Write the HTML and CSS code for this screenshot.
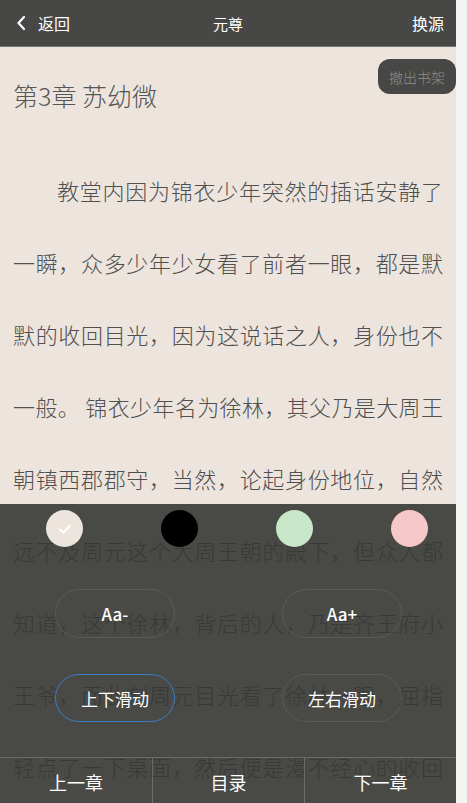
FILE: index.html
```html
<!DOCTYPE html>
<html lang="zh">
<head>
<meta charset="utf-8">
<title>元尊</title>
<link rel="stylesheet" href="styles.css">
</head>
<body>
<div class="page">
  <header class="topbar">
    <div class="back">
      <svg class="chev" width="10" height="16" viewBox="0 0 10 16"><path d="M8 2 L2.5 8 L8 14" fill="none" stroke="#fff" stroke-width="2.2" stroke-linecap="round" stroke-linejoin="round"/></svg>
      <span>返回</span>
    </div>
    <div class="title">元尊</div>
    <div class="source">换源</div>
  </header>

  <main class="reader">
    <h1 class="chapter">第3章 苏幼微</h1>
    <p class="text">教堂内因为锦衣少年突然的插话安静了一瞬，众多少年少女看了前者一眼，都是默默的收回目光，因为这说话之人，身份也不一般。 锦衣少年名为徐林，其父乃是大周王朝镇西郡郡守，当然，论起身份地位，自然远不及周元这个大周王朝的殿下，但众人都知道，这个徐林，背后的人，乃是齐王府小王爷，而此刻周元目光看了徐林一眼，屈指轻点了一下桌面，然后便是漫不经心的收回了目光，似乎并未将其放在心上。</p>
  </main>

  <button class="shelf">撤出书架</button>

  <section class="panel">
    <div class="swatches">
      <span class="swatch beige">
        <svg width="14" height="12" viewBox="0 0 14 12"><path d="M2 6.5 L5.5 9.5 L12 2.5" fill="none" stroke="#fff" stroke-width="2" stroke-linecap="round" stroke-linejoin="round"/></svg>
      </span>
      <span class="swatch black"></span>
      <span class="swatch green"></span>
      <span class="swatch pink"></span>
    </div>
    <div class="btnrow">
      <button class="pill">Aa-</button>
      <button class="pill">Aa+</button>
    </div>
    <div class="btnrow second">
      <button class="pill active">上下滑动</button>
      <button class="pill">左右滑动</button>
    </div>
    <nav class="bottombar">
      <a class="navitem">上一章</a>
      <a class="navitem">目录</a>
      <a class="navitem">下一章</a>
    </nav>
  </section>
</div>
</body>
</html>
```

FILE: styles.css
```css
html, body {
  margin: 0;
  padding: 0;
  height: 100%;
  overflow: hidden;
}
body {
  background: #f3f3f3;
  font-family: "Noto Sans CJK SC", "Noto Sans", sans-serif;
}
.page {
  position: relative;
  width: 456px;
  height: 803px;
  background: #ede5dd;
  overflow: hidden;
}
.topbar {
  height: 46px;
  background: #474846;
  border-bottom: 1px solid #7a7a78;
  display: flex;
  align-items: center;
  justify-content: space-between;
  padding: 0 12px 0 16px;
  color: #fff;
  font-size: 16px;
  position: relative;
}
.back {
  display: flex;
  align-items: center;
  gap: 12px;
}
.chev { display: block; }
.title {
  position: absolute;
  left: 0;
  right: 0;
  text-align: center;
  pointer-events: none;
  font-size: 15px;
}
.reader {
  padding: 0 13px;
}
.chapter {
  margin: 0;
  padding-top: 30px;
  height: 63px;
  line-height: 36px;
  font-size: 25px;
  font-weight: 300;
  color: #555;
}
.text {
  margin: 14px 0 0;
  font-size: 22px;
  font-weight: 300;
  line-height: 72px;
  color: #4f4f4f;
  text-indent: 2em;
  text-align: justify;
}
.shelf {
  position: absolute;
  top: 59px;
  right: 0;
  width: 78px;
  height: 35px;
  border: none;
  border-radius: 12px;
  background: #474846;
  color: #8d8d8b;
  font-family: "Noto Sans CJK SC", sans-serif;
  font-size: 14px;
  font-weight: 300;
  padding: 0;
}
.panel {
  position: absolute;
  left: 0;
  bottom: 0;
  width: 456px;
  height: 299px;
  background: rgba(54, 55, 53, 0.9);
  display: flex;
  flex-direction: column;
}
.swatches {
  display: flex;
  gap: 78px;
  padding: 6px 0 0 46px;
  height: 37px;
}
.swatch {
  width: 37px;
  height: 37px;
  border-radius: 50%;
  display: flex;
  align-items: center;
  justify-content: center;
}
.swatch.beige { background: #ede5dd; }
.swatch.black { background: #000; }
.swatch.green { background: #c8e6c8; }
.swatch.pink { background: #f7c8c8; }
.btnrow {
  display: flex;
  gap: 107px;
  padding-left: 55px;
  margin-top: 42px;
}
.btnrow.second { margin-top: 36px; }
.pill {
  width: 120px;
  height: 49px;
  border: 1px solid #5a5a58;
  border-radius: 25px;
  background: transparent;
  color: #fff;
  font-family: "Noto Sans CJK SC", "Noto Sans", sans-serif;
  font-size: 17px;
  font-weight: 500;
  padding: 0;
}
.btnrow.second .pill {
  height: 48px;
  font-size: 17px;
  font-weight: 400;
}
.pill.active { border-color: #3a7cc6; }
.bottombar {
  margin-top: auto;
  height: 45px;
  border-top: 1px solid #6a6a68;
  display: grid;
  grid-template-columns: 152px 152px 152px;
}
.navitem {
  display: flex;
  align-items: center;
  justify-content: center;
  color: #fff;
  font-size: 18px;
  padding-top: 3px;
}
.navitem + .navitem {
  border-left: 1px solid #6a6a68;
}
```
